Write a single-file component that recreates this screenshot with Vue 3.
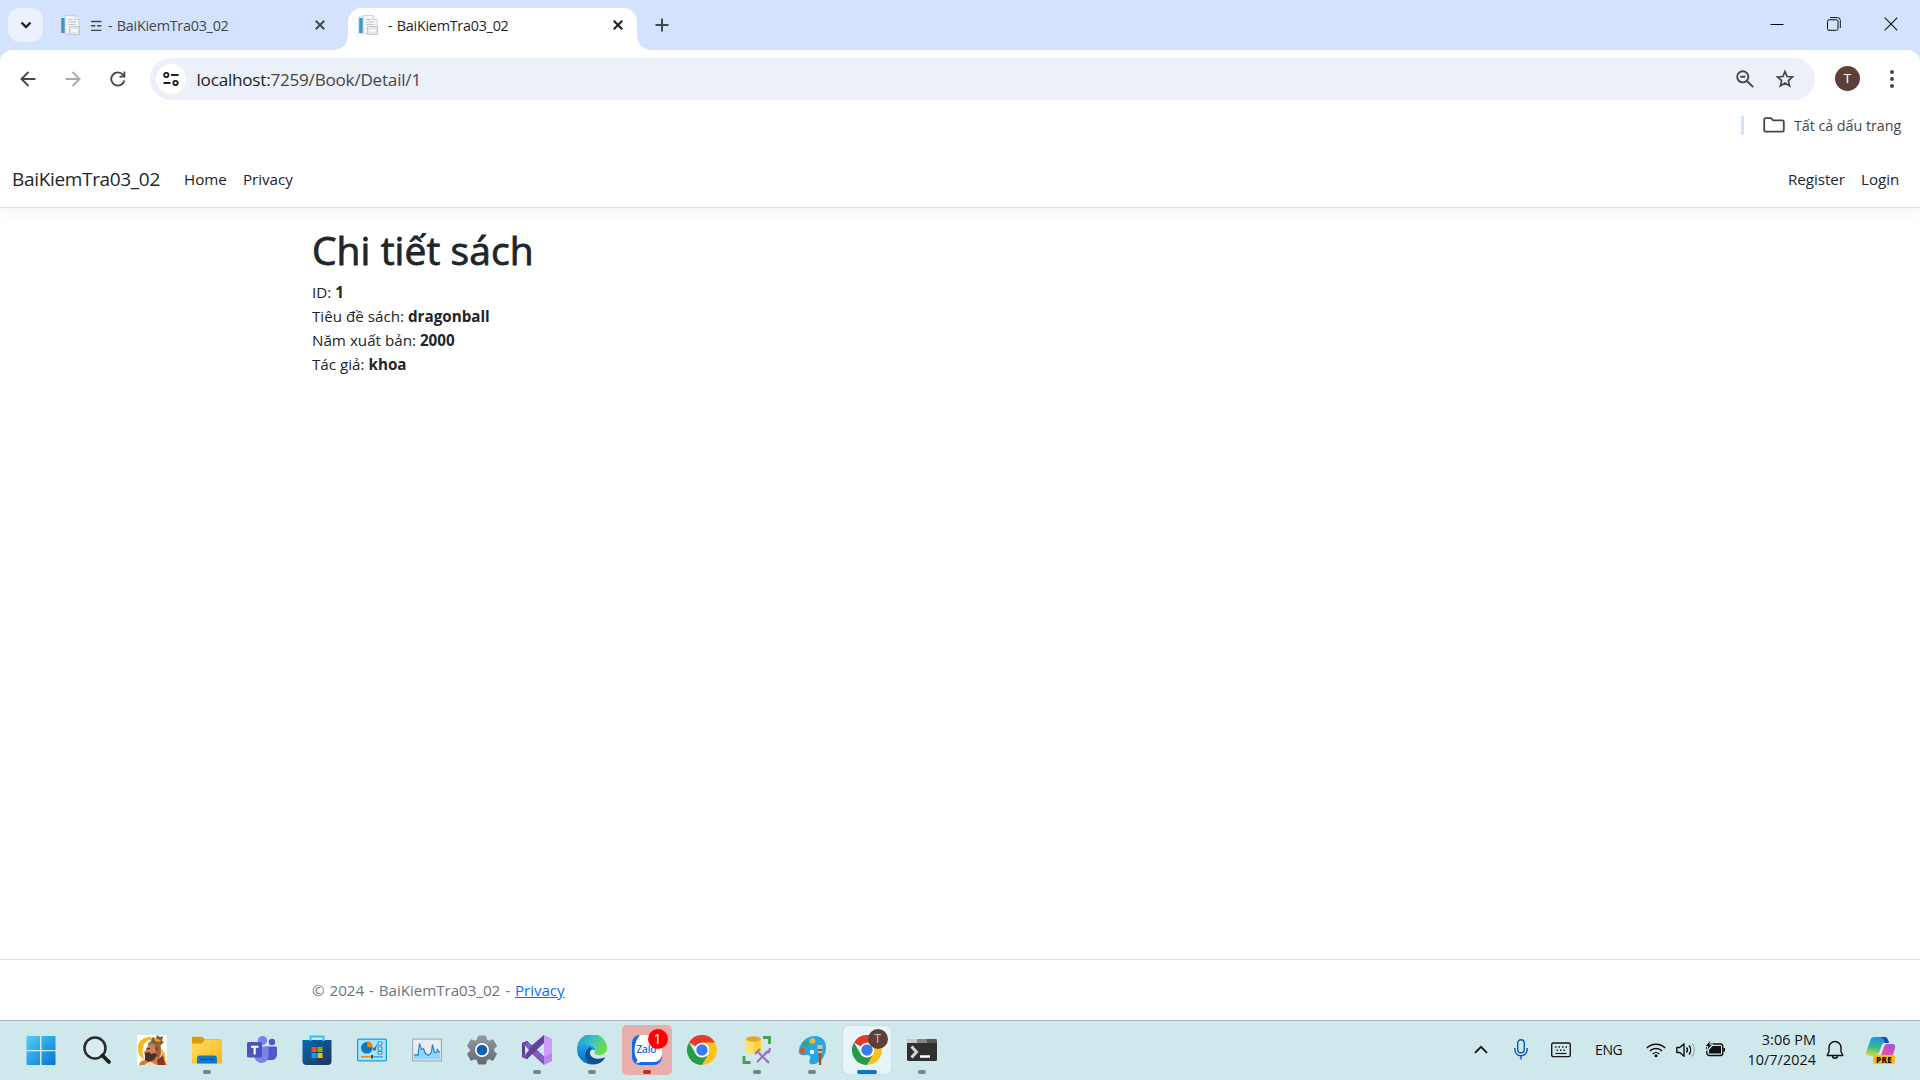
<script setup>
const tabs = [
  { trigram: '☲', title: '- BaiKiemTra03_02', active: false },
  { trigram: '', title: '- BaiKiemTra03_02', active: true },
]

const details = [
  { label: 'ID', value: '1' },
  { label: 'Tiêu đề sách', value: 'dragonball' },
  { label: 'Năm xuất bản', value: '2000' },
  { label: 'Tác giả', value: 'khoa' },
]
</script>

<template>
  <div class="screen">
    <header class="tab-strip">
      <button class="tab-search">
        <svg width="12" height="8" viewBox="0 0 12 8"><path d="M1.5 1.5 6 6l4.500-4.500" fill="none" stroke="#1f1f1f" stroke-width="2.300" /></svg>
      </button>
      <div v-for="(t, i) in tabs" :key="i" class="tab" :class="{ active: t.active }">
        <svg class="favicon" viewBox="0 0 20 20">
          <path d="M5 .5h10l4 4v14H5z" fill="#f4f5f6" stroke="#c6cbd0" stroke-width=".8" />
          <path d="M15 .5v4h4" fill="#fff" stroke="#bfc5cb" stroke-width=".8" />
          <path d="M8 4.500h5M8 7h8M8 9.500h8" stroke="#bfc5cc" />
          <path d="M.5 1.500h4.500v17H.5z" fill="#e3eff8" stroke="#ccd7e0" stroke-width=".6" />
          <path d="M1.200 3h3.500v15H1.200z" fill="#3b97d0" />
          <path d="M9.500 11.500h10v8h-10z" fill="#e6e9ed" stroke="#b6bcc4" stroke-width=".8" />
          <path d="M11 14h7v3h-7z" fill="#fff" stroke="#d2d6db" stroke-width=".6" />
        </svg>
        <span class="tab-title"><span v-if="t.trigram" class="trigram">{{ t.trigram }}</span><span class="tab-text">{{ t.title }}</span></span>
        <svg class="tab-close" viewBox="0 0 10 10"><path d="M.8.8l8.400 8.400M9.200.8.800 9.200" stroke="currentColor" stroke-width="2" /></svg>
      </div>
      <svg class="new-tab" width="14" height="14" viewBox="0 0 14 14"><path d="M7 .5v13M.5 7h13" stroke="#444746" stroke-width="2" /></svg>
      <div class="window-controls">
        <svg width="14" height="14" viewBox="0 0 14 14"><path d="M.5 7.500h13" stroke="#000" /></svg>
        <svg width="14" height="14" viewBox="0 0 14 14" fill="none" stroke="#111"><rect x=".5" y="2.800" width="10.500" height="10.500" rx="1.500" /><path d="M3 .6h7.500a2.800 2.800 0 0 1 2.800 2.800v7.600" /></svg>
        <svg width="14" height="14" viewBox="0 0 14 14"><path d="M.7.7l12.600 12.600M13.300.7.700 13.300" stroke="#111" stroke-width="1.100" /></svg>
      </div>
    </header>

    <div class="toolbar-wrap">
      <div class="toolbar">
        <svg class="nav-icon" viewBox="0 0 16 16"><path d="M15.500 8H2M8.500 1 1.500 8l7 7" fill="none" stroke="#444746" stroke-width="1.900" /></svg>
        <svg class="nav-icon" viewBox="0 0 16 16"><path d="M.5 8H14M7.500 1l7 7-7 7" fill="none" stroke="#a9abab" stroke-width="1.900" /></svg>
        <svg class="nav-icon" viewBox="0 0 16 16"><path d="M14.300 9.500A6.600 6.600 0 1 1 12.800 3.600L14.500 5.300" fill="none" stroke="#444746" stroke-width="1.900" /><path d="M15.300.5v6H9.500V4.700h4V.5z" fill="#444746" /></svg>
        <div class="omnibox">
          <span class="site-info">
            <svg width="16" height="14" viewBox="0 0 16 14" fill="none" stroke="#1f1f1f" stroke-width="1.800"><circle cx="3.300" cy="3" r="2.200" /><path d="M8 3h7.500M.5 11h7" /><circle cx="12.500" cy="11" r="2.200" /></svg>
          </span>
          <span class="url"><b>localhost:</b>7259/Book/Detail/1</span>
          <svg class="zoom-out" width="18" height="18" viewBox="0 0 18 18" fill="none" stroke="#444746" stroke-width="1.900"><circle cx="6.800" cy="6.800" r="5.600" /><path d="M11 11l6.200 6.200M4.200 6.800h5.200" /></svg>
          <svg width="20" height="20" viewBox="0 0 20 20"><path d="M10 2.500l2.100 5 5.400.5-4.100 3.600 1.200 5.300L10 14.100l-4.600 2.800 1.200-5.300L2.500 8l5.400-.5z" fill="none" stroke="#444746" stroke-width="1.700" /></svg>
        </div>
        <span class="avatar">T</span>
        <svg class="kebab" width="6" height="20" viewBox="0 0 6 20" fill="#444746"><circle cx="3" cy="3" r="2" /><circle cx="3" cy="10" r="2" /><circle cx="3" cy="17" r="2" /></svg>
      </div>
    </div>

    <div class="bookmarks">
      <span class="separator"></span>
      <svg width="22" height="16" viewBox="0 0 22 16"><path d="M1.200 13.300V2.500A1.300 1.300 0 0 1 2.500 1.200H8L10.200 3.400h9.300a1.300 1.300 0 0 1 1.300 1.300v8.600a1.300 1.300 0 0 1-1.300 1.300H2.500a1.300 1.300 0 0 1-1.300-1.300z" fill="none" stroke="#444746" stroke-width="1.800" /></svg>
      <span class="bookmarks-label">Tất cả dấu trang</span>
    </div>

    <nav class="navbar">
      <a class="brand">BaiKiemTra03_02</a>
      <a class="link home">Home</a>
      <a class="link privacy">Privacy</a>
      <a class="link register">Register</a>
      <a class="link login">Login</a>
    </nav>

    <main>
      <h1>Chi tiết sách</h1>
      <div v-for="d in details" :key="d.label" class="detail">{{ d.label }}: <b>{{ d.value }}</b></div>
    </main>

    <footer>© 2024 - BaiKiemTra03_02 - <a>Privacy</a></footer>

    <div class="taskbar">
      <div class="apps">
        <span class="app start">
          <svg width="30" height="30" viewBox="0 0 30 30">
            <defs><linearGradient id="win" x1="0" y1="0" x2="1" y2="1"><stop offset="0" stop-color="#4fd0fb" /><stop offset="1" stop-color="#0573d0" /></linearGradient></defs>
            <path d="M.5 2a1 1 0 0 1 1-1H14v14H.5zM15.500 1H28.500a1 1 0 0 1 1 1V15h-14zM.5 16.200H14V30H1.500a1 1 0 0 1-1-1zM15.500 16.200h14V29a1 1 0 0 1-1 1h-13z" fill="url(#win)" />
          </svg>
        </span>
        <span class="app">
          <svg width="30" height="30" viewBox="0 0 30 30"><circle cx="13" cy="13" r="10.500" fill="#dcecef" stroke="#2b2b2b" stroke-width="2.500" /><path d="M20.500 20.500l6.500 6.500" stroke="#1d1d1d" stroke-width="3.800" stroke-linecap="round" /></svg>
        </span>
        <span class="app">
          <svg width="30" height="30" viewBox="0 0 30 30">
            <path d="M0 0h30v30H0z" fill="#fffdf8" />
            <path d="M14 1.500C5 2 0 7 1 15c.5 5 3 8 7 9.500C4 19 4.500 9 11 5.500l4-1z" fill="#fbb91c" />
            <path d="M25 14c3 3 4 7 3 12l-5 2z" fill="#f3b73b" />
            <path d="M2 30c1-4 4-5.500 8-5l10-3 8 3 2 5z" fill="#c98236" />
            <path d="M11 10c2-2 8-3 11 0 3 3 3 8 1 12l-5 5-8-1-2-5-1-4 2-2z" fill="#c98055" />
            <path d="M17 9c4-1 7 1 7 5s-1 7-3 9l-3-3 1-5z" fill="#a65c38" />
            <path d="M11 9c1-3 4-4 7-3 4 0 6 2 6 5-4-2-8-2-13-1z" fill="#857a73" />
            <path d="M14 5l2-3 3 2 1-4 3 2 3-1-1 5 2 1-3 3-5-1-4-1z" fill="#8a5c20" />
            <path d="M17 4l4 0 3 2-2 1-4-1z" fill="#e0a82f" />
            <path d="M8 18l4-1 2 2 4-1 2 2-3 5-5 2-4-2z" fill="#503026" />
            <path d="M9.500 14l3.500-.6M19 12.500l1 3" stroke="#5e3122" stroke-width="1.300" />
            <path d="M20 25l6-5 2 10h-7z" fill="#8f3322" />
            <path d="M8 29l5-2.500 7 3.500H8z" fill="#f3ddb0" />
          </svg>
        </span>
        <span class="app running">
          <svg width="30" height="30" viewBox="0 0 30 30">
            <defs><linearGradient id="folder" x1="0" y1="0" x2="1" y2="1"><stop offset="0" stop-color="#ffdc66" /><stop offset="1" stop-color="#fcb814" /></linearGradient></defs>
            <path d="M0 9V3a1.300 1.300 0 0 1 1.300-1.300H10L13 4.500h15a2 2 0 0 1 2 2V9z" fill="#dc9a0b" />
            <path d="M0 8.500h9.500L13 5h15.500A1.500 1.500 0 0 1 30 6.500V28.500H0z" fill="url(#folder)" />
            <path d="M5 28.500v-5a3 3 0 0 1 3-3h14a3 3 0 0 1 3 3v5z" fill="#1078c8" /><path d="M8 24.500h14" stroke="#084e8d" stroke-width="1.200" />
          </svg>
        </span>
        <span class="app">
          <svg width="30" height="30" viewBox="0 0 30 30">
            <circle cx="25" cy="7" r="3.200" fill="#5059c9" /><path d="M18 11.500h10.500a1.500 1.500 0 0 1 1.500 1.500v6c0 4-2.500 6-5.500 6H20z" fill="#5059c9" />
            <circle cx="15.500" cy="5.500" r="4.600" fill="#7b83eb" /><path d="M8 11.500h13.500V21a7 7 0 0 1-14 0z" fill="#7b83eb" />
            <rect x="0" y="7" width="15" height="15.500" rx="1.500" fill="#4b53bc" /><path d="M4 10.800h7.400v2H8.700v6.600H6.600v-6.600H4z" fill="#fff" />
          </svg>
        </span>
        <span class="app">
          <svg width="30" height="30" viewBox="0 0 30 30">
            <defs><linearGradient id="store" x1="0" y1="0" x2="1" y2="1"><stop offset="0" stop-color="#0669b4" /><stop offset="1" stop-color="#243258" /></linearGradient></defs>
            <path d="M.5 5h29v21a4 4 0 0 1-4 4h-21a4 4 0 0 1-4-4z" fill="url(#store)" />
            <path d="M8.500 6V1.500h13V6" fill="none" stroke="#29c5f6" stroke-width="2" />
            <path d="M9.500 12h5v5h-5z" fill="#f25022" /><path d="M15.500 12h5v5h-5z" fill="#7fba00" /><path d="M9.500 18h5v5h-5z" fill="#00a4ef" /><path d="M15.500 18h5v5h-5z" fill="#ffb900" />
          </svg>
        </span>
        <span class="app">
          <svg width="30" height="30" viewBox="0 0 30 30">
            <rect x=".6" y="4.100" width="28.800" height="21.800" rx="1.200" fill="#a5e5fb" stroke="#1c9bd8" stroke-width="1.200" />
            <circle cx="9.800" cy="12.800" r="5.800" fill="#1676bd" /><path d="M10.300 12.200V6a6.500 6.500 0 0 1 5.500 6.200z" fill="#ef8214" />
            <path d="M17 15l3-5" stroke="#1c76b8" stroke-width="1.300" /><path d="M21 7h4v3h-4zM21 12h4v3h-4zM21 16.500h4v2.500h-4z" fill="#eafaff" stroke="#2177b4" stroke-width=".9" />
            <circle cx="17.500" cy="14" r="1.600" fill="#1c76b8" />
            <path d="M4 21.800h11" stroke="#f08b22" stroke-width="1.600" /><path d="M15 21.800h11" stroke="#4796c8" stroke-width="1.300" /><path d="M14 20h2v3.500h-2z" fill="#0b588f" />
          </svg>
        </span>
        <span class="app">
          <svg width="30" height="30" viewBox="0 0 30 30">
            <rect x=".6" y="4.100" width="28.800" height="21.800" fill="#e9ecf1" stroke="#a7adb8" stroke-width="1.200" />
            <path d="M2 24.500v-4l2-1 2 1 1.500-12 2 6 2-1 2 5 3 2 2-2 1-2 1-7 2 8 2 0 1-3 1 2 1.500 1v7z" fill="#94d4f9" /><path d="M2 20.500l2-1 2 1L7.500 8.500l2 6 2-1 2 5 3 2 2-2 1-2 1-7 2 8h2l1-3 1 2 1.500 1" fill="none" stroke="#2988c5" stroke-width="1.200" />
          </svg>
        </span>
        <span class="app">
          <svg width="30" height="30" viewBox="0 0 30 30">
            <defs><linearGradient id="gear" x1="0" y1="0" x2="0" y2="1"><stop offset="0" stop-color="#939aa1" /><stop offset="1" stop-color="#626971" /></linearGradient></defs>
            <path d="M11.500 1h7l1.200 4 2.300 1.200 4-1.500L29.500 11 26.700 14v2l2.800 3-3.500 6.300-4-1.500-2.300 1.200-1.200 4h-7l-1.200-4L8 23.800l-4 1.500L.5 19l2.800-3v-2L.5 11 4 4.700l4 1.500L10.300 5z" fill="url(#gear)" stroke="url(#gear)" stroke-linejoin="round" />
            <circle cx="15" cy="15" r="7" fill="#fff" /><circle cx="15" cy="15" r="5.300" fill="#0b62b4" />
          </svg>
        </span>
        <span class="app running">
          <svg width="30" height="30" viewBox="0 0 30 30">
            <path d="M0 8l5-2 8 9-8 9-5-2z" fill="#5c3d99" /><path d="M5 6l4 5v8l-4 5-5-2 4-7-4-7z" fill="#774aae" />
            <path d="M5 6l17 17v7L9 18 0 22l4-4z" fill="#8257bc" /><path d="M5 6l-1.500 4L22 28v-7z" fill="#805cc3" />
            <path d="M5 24 22 8V0L9 11 4 20z" fill="#63429e" /><path d="M22 0l8 4v22l-8 4z" fill="#bd86ef" /><path d="M22 0l8 4v14l-8 4z" fill="#cf9bfa" /><path d="M3 10.500v9l4-4.500z" fill="#cfe8ec" /><path d="M22 9v12l-6-6z" fill="#cfe8ec" />
          </svg>
        </span>
        <span class="app running">
          <svg width="30" height="30" viewBox="0 0 30 30">
            <defs>
              <linearGradient id="edge-a" x1="0" y1="0" x2="1" y2=".5"><stop offset="0" stop-color="#1697d3" /><stop offset=".5" stop-color="#37c0cc" /><stop offset="1" stop-color="#68e043" /></linearGradient>
              <linearGradient id="edge-b" x1="0" y1="0" x2="0" y2="1"><stop offset="0" stop-color="#24a6ea" /><stop offset="1" stop-color="#0866bb" /></linearGradient>
            </defs>
            <path d="M0 15A15 15 0 0 1 30 12.500c0 5.500-3.800 7.500-7.500 7.500-4 0-5-1-5-2s1.500-1.500 1-4C16 8 3 7 0 15z" fill="url(#edge-a)" />
            <path d="M0 15c1-6 7-7.500 12-5.500 4 1 7 4 6.500 6-4-2-6.500 1-5.500 4 2 5 8 7 14 4A15 15 0 0 1 0 15z" fill="url(#edge-b)" />
            <path d="M13 12c-4 3-6 8-3.500 12.500 2 3.500 6 5.500 10.500 4.500 4-1 6.500-3.500 8-6-.5-1-1-.5-2 0-6 2-12 0-13-4-.7-2.500.5-4.500 2-5.500z" fill="#134d91" />
          </svg>
        </span>
        <span class="app running alert">
          <svg width="30" height="30" viewBox="0 0 30 30"><rect width="30" height="30" rx="8" fill="#1469f2" /><path d="M8 0h14a8 8 0 0 1 8 8v11a8 8 0 0 1-8 8H9l-5 1.500 1.500-3.500C1 20 1.500 7 8 0z" fill="#fff" /></svg>
          <span class="zalo-name">Zalo</span>
          <span class="count">1</span>
        </span>
        <span class="app">
          <svg width="30" height="30" viewBox="0 0 30 30">
            <path d="M15 15 2 7.500A15 15 0 0 1 28 7.500z" fill="#e33b2e" /><path d="M15 7.500h13a15 15 0 0 1 2 7.500 15 15 0 0 1-15 15l6.500-11.250z" fill="#fbc31a" /><path d="M2 7.500l6.500 11.250A7.500 7.500 0 0 0 21.500 18.750L15 30A15 15 0 0 1 2 7.500z" fill="#299b48" />
            <circle cx="15" cy="15" r="7.300" fill="#fff" /><circle cx="15" cy="15" r="5.700" fill="#387cf0" />
          </svg>
        </span>
        <span class="app running">
          <svg width="30" height="30" viewBox="0 0 30 30">
            <path d="M4 4v12c0 3 15 3 15 0V4z" fill="#fdd63c" /><path d="M4 4v12c0 2 4 2.300 7 2.300V6z" fill="#ffe26a" /><ellipse cx="11.500" cy="4" rx="7.500" ry="2.800" fill="#e9a42b" />
            <path d="M21 2.500h6.500V9M2 21v6.500h6.500" fill="none" stroke="#43a052" stroke-width="2.800" />
            <path d="M16 17l10 10M26 16 15 27" stroke="#a968d4" stroke-width="2.200" /><path d="M13 19l5-5M23 18l4-1 1-4M24 25l3 3" fill="none" stroke="#a968d4" stroke-width="2.300" />
          </svg>
        </span>
        <span class="app running">
          <svg width="30" height="30" viewBox="0 0 30 30">
            <path d="M2 15C3 7 10 1 18 1c7 0 11 5 11 11 0 9-5 15-11 17-5 1-7-1-5-5 1-3 0-4-4-4-5 1-8-1-7-5z" fill="#29a7df" />
            <circle cx="15" cy="17" r="2.300" fill="#d8f0f7" /><circle cx="5.500" cy="15.500" r="2.700" fill="#e65131" /><circle cx="8.500" cy="9" r="2.800" fill="#37a84b" /><circle cx="15.500" cy="6" r="2.800" fill="#f9b928" />
            <path d="M20.500 10h5v6l-1 2h-3l-1-2z" fill="#e2bc91" /><path d="M20.500 14h5v2h-5z" fill="#70685f" /><path d="M21.500 18h3l-.3 12h-2.200z" fill="#a95413" />
          </svg>
        </span>
        <span class="app current">
          <svg width="30" height="30" viewBox="0 0 30 30">
            <path d="M15 15 2 7.500A15 15 0 0 1 28 7.500z" fill="#e33b2e" /><path d="M15 7.500h13a15 15 0 0 1 2 7.500 15 15 0 0 1-15 15l6.500-11.250z" fill="#fbc31a" /><path d="M2 7.500l6.500 11.250A7.500 7.500 0 0 0 21.500 18.750L15 30A15 15 0 0 1 2 7.500z" fill="#299b48" />
            <circle cx="15" cy="15" r="7.300" fill="#fff" /><circle cx="15" cy="15" r="5.700" fill="#387cf0" />
          </svg>
          <span class="profile">T</span>
        </span>
        <span class="app running">
          <svg width="30" height="30" viewBox="0 0 30 30"><path d="M0 8V5.500A1.500 1.500 0 0 1 1.500 4h27A1.500 1.500 0 0 1 30 5.500V8z" fill="#858585" /><path d="M0 8V5.500A1.500 1.500 0 0 1 1.500 4H10v4z" fill="#c9c9c9" /><path d="M20 4h8.500A1.500 1.500 0 0 1 30 5.500V8H20z" fill="#565656" /><path d="M0 8h30v16.500a1.500 1.500 0 0 1-1.500 1.500h-27A1.500 1.500 0 0 1 0 24.500z" fill="#303030" /><path d="M4.500 11.500l5 5.500-5 5.500" fill="none" stroke="#d5d5d5" stroke-width="3" /><path d="M13 21.500h10" stroke="#fff" stroke-width="2.500" /></svg>
        </span>
      </div>

      <div class="tray">
        <svg class="chevron" width="14" height="9" viewBox="0 0 14 9"><path d="M1 7.800 7 1.800l6 6" fill="none" stroke="#111" stroke-width="1.800" /></svg>
        <svg class="mic" width="14" height="21" viewBox="0 0 14 21" fill="none" stroke="#0c59b5" stroke-width="1.400"><rect x="3.700" y=".8" width="6.600" height="13" rx="3.300" /><path d="M.8 9v1.500a6.200 6.200 0 0 0 12.400 0V9M7 16.800V20.500" /></svg>
        <svg class="keyboard" width="20" height="16" viewBox="0 0 20 16" fill="none" stroke="#1a1a1a" stroke-width="1.400"><rect x=".7" y="1" width="18.600" height="13.600" rx="1.500" /><path d="M4 5h1.500m2 0H9m2 0h1.500m2 0H16M5.500 8.200H7m2 0h1.500m2 0H14" stroke-width="1.600" /><path d="M4.500 11.500h11" stroke-width="1.200" /></svg>
        <span class="lang">ENG</span>
        <svg class="wifi" width="20" height="16" viewBox="0 0 20 16" fill="none" stroke="#111" stroke-width="1.400"><path d="M.8 6a13 13 0 0 1 18.400 0M3.800 9a8.800 8.800 0 0 1 12.400 0M6.700 12a4.700 4.700 0 0 1 6.600 0" /><circle cx="10" cy="13.700" r="1.500" fill="#111" stroke="none" /></svg>
        <svg class="sound" width="20" height="16" viewBox="0 0 20 16" fill="none" stroke="#111" stroke-width="1.400"><path d="M.8 5.500h3L8 1.800v12.400L3.800 10.500h-3z" stroke-linejoin="round" /><path d="M10.500 5.500a4 4 0 0 1 0 5M13 3.500a7 7 0 0 1 0 9" /><path d="M16 1.500a10 10 0 0 1 0 13" stroke="#9db5bb" /></svg>
        <svg class="battery" width="21" height="17" viewBox="0 0 21 17"><rect x="1.800" y="4" width="16" height="11.500" rx="2.500" fill="none" stroke="#111" stroke-width="1.400" /><path d="M7.500 6H16v7.500H4V10zM18.300 8h1.700v3.500h-1.700z" fill="#111" /><path d="M5.800-.5-.2 6.500h3L1.500 11 8 4.200H4.800z" fill="#111" stroke="#cfe8ec" stroke-width="1" /></svg>
        <div class="clock"><span class="time">3:06 PM</span><span class="date">10/7/2024</span></div>
        <svg class="bell" width="18" height="20" viewBox="0 0 18 20" fill="none" stroke="#111" stroke-width="1.400"><path d="M9 1.500a6 6 0 0 0-6 6v4L1.200 15.500h15.600L15 11.500v-4a6 6 0 0 0-6-6zM6.500 15.800a2.500 2.500 0 0 0 5 0" stroke-linejoin="round" /></svg>
        <div class="copilot">
          <svg width="30" height="28" viewBox="0 0 30 28">
            <defs>
              <linearGradient id="cp-a" x1=".3" y1="0" x2=".2" y2="1"><stop offset="0" stop-color="#1f95e8" /><stop offset=".5" stop-color="#31b98f" /><stop offset="1" stop-color="#dfdc35" /></linearGradient>
              <linearGradient id="cp-b" x1="1" y1="0" x2="0" y2="1"><stop offset="0" stop-color="#9b50e0" /><stop offset=".5" stop-color="#e654a4" /><stop offset="1" stop-color="#fa973f" /></linearGradient>
            </defs>
            <path d="M8 1h11q2 0 3 3l1 3h-4q-3 0-4 4l-2 6q-1 3-4 3H4q-5 0-3.500-5L4 5q1-4 4-4z" fill="url(#cp-a)" /><path d="M14 1h5q2 0 3 3l1 3h-4q-1-5-5-6z" fill="#1647c5" />
            <path d="M20 8h6q4 0 3 4l-3 10q-1 4-5 4H10q-3-1-3-4h4q3 0 4-4l2-6q1-4 3-4z" fill="url(#cp-b)" />
            <path d="M17.500 7.500h3q-2 1-3 4l-2 6q-1 2.500-3 3h-1.500q2-.5 3-3.500l2-6q.5-2.500 1.500-3.500z" fill="#e6f1f3" />
          </svg>
          <span class="pre">PRE</span>
        </div>
      </div>
    </div>
  </div>
</template>

<style>
body { overflow: hidden; }
</style>

<style scoped>
* { box-sizing: border-box; }
.screen { width: 1920px; height: 1080px; display: flex; flex-direction: column; background: #fff; color: #212529; font-family: "Open Sans", "Noto Sans", sans-serif; font-size: 15.2px; white-space: nowrap; overflow: hidden; }
svg { display: block; flex: none; }

.tab-strip { height: 50px; flex: none; display: flex; padding: 8px 22px 0 8px; background: #d3e3fd; }
.tab-search { width: 35px; height: 34px; border: 0; padding: 0; border-radius: 12px; background: #ebf1fe; display: flex; align-items: center; justify-content: center; }
.tab { width: 305px; height: 42px; display: flex; align-items: center; padding: 0 23px 8px 17px; color: #444746; }
.tab.active { position: relative; width: 289px; padding: 0 14px 8px 10px; border-radius: 14px 14px 0 0; background: #fff; color: #1f1f1f; }
.tab.active::before, .tab.active::after { content: ""; position: absolute; bottom: 0; width: 14px; height: 14px; }
.tab.active::before { right: 100%; background: radial-gradient(circle at 0 0, transparent 13.5px, #fff 14px); }
.tab.active::after { left: 100%; background: radial-gradient(circle at 100% 0, transparent 13.5px, #fff 14px); }
.favicon { width: 20px; height: 20px; }
.tab-title { flex: 1; display: flex; align-items: center; margin-left: 10px; padding-top: 2px; font-size: 14.4px; line-height: 20px; }
.trigram { width: 18px; font-family: "DejaVu Sans", sans-serif; font-size: 14px; }
.tab-text { letter-spacing: -0.27px; word-spacing: 1px; }
.tab-close { width: 10px; height: 10px; }
.new-tab { margin: 10px 0 0 18px; }
.window-controls { margin: 9px 0 0 auto; display: flex; gap: 43px; }

.toolbar-wrap { background: #d3e3fd; flex: none; }
.toolbar { height: 58px; display: flex; align-items: center; padding: 0 25px 0 20px; border-radius: 12px 12px 0 0; background: #fff; }
.nav-icon { width: 16px; height: 16px; margin-right: 29px; }
.nav-icon:nth-child(3) { margin-right: 24px; }
.omnibox { width: 1665px; height: 42px; display: flex; align-items: center; padding: 0 20px 0 6px; border-radius: 21px; background: #ecf0f9; }
.site-info { width: 30px; height: 30px; border-radius: 50%; background: #fff; display: flex; align-items: center; justify-content: center; }
.url { flex: 1; margin-left: 10.5px; font-size: 17.1px; letter-spacing: -0.22px; color: #474747; }
.url b { font-weight: 400; color: #1f1f1f; }
.zoom-out { margin-right: 21px; }
.avatar { width: 25px; height: 25px; margin: 0 29px 1px 20px; border-radius: 50%; background: #5d4037; color: #fff; font: 13px/25px Roboto, sans-serif; text-align: center; }
.kebab { margin-bottom: 1px; }
.bookmarks { height: 36px; flex: none; display: flex; align-items: center; justify-content: flex-end; padding: 0 19px 2px 0; }
.separator { width: 3px; height: 19px; margin-right: 19px; border-radius: 1px; background: #d3e3fd; }
.bookmarks-label { width: 107px; margin-left: 9px; font-size: 14.4px; letter-spacing: -.08px; color: #474747; }

.navbar { height: 64px; flex: none; display: flex; align-items: center; padding: 6px 20px 0 12px; border-bottom: 1px solid #dee2e6; box-shadow: 0 4px 12px rgba(0, 0, 0, .05); clip-path: inset(0 0 -20px 0); }
.brand { width: 172px; font-size: 19px; letter-spacing: -.33px; }
.home { width: 59px; }
.privacy { flex: 1; }
.link { letter-spacing: -.05px; }
.register { width: 73px; }
.login { width: 39px; }

main { flex: 1; padding: 16px 312px 0; }
h1 { margin: 0 0 8px; font-size: 39px; line-height: 51px; height: 48px; font-weight: 400; letter-spacing: .05px; -webkit-text-stroke: .8px #212529; }
.detail { line-height: 24px; }
footer { height: 61px; flex: none; padding-left: 312px; border-top: 1px solid #dee2e6; color: #6c757d; line-height: 60px; word-spacing: 1.1px; letter-spacing: -.06px; }
footer a { color: #0d6efd; text-decoration: underline; }

.taskbar { height: 60px; flex: none; display: flex; justify-content: space-between; border-top: 1px solid #a6b5ba; background: #cfe8ec; color: #111; }
.apps { display: flex; align-items: center; gap: 7px; padding: 0 0 1px 17.500px; }
.app { position: relative; width: 48px; height: 50px; display: flex; align-items: center; justify-content: center; border-radius: 5px; }
.start svg { margin-right: 2px; }
.running::after, .current::after { content: ""; position: absolute; left: 50%; bottom: 1px; width: 8px; height: 4px; margin-left: -4px; border-radius: 2px; background: #748487; }
.alert { width: 50px; margin: 0 -1px; background: #e8aeab; }
.alert::after { background: #c42b1c; }
.current { background: #e6f3f7; box-shadow: 0 0 1px rgba(0, 0, 0, .25); height: 48px; }
.current::after { width: 20px; margin-left: -10px; bottom: 0; background: #0078d4; }
.zalo-name { position: absolute; left: 15px; top: 17px; width: 24px; font: 600 10px/14px "Open Sans", sans-serif; letter-spacing: -.2px; color: #1469f2; }
.count { position: absolute; left: 26px; top: 4px; width: 20px; height: 20px; border-radius: 50%; background: #f00; color: #fff; font-size: 14px; line-height: 20px; text-align: center; }
.profile { position: absolute; left: 25px; top: 3px; width: 20px; height: 20px; border-radius: 50%; background: #5d4037; color: #c9bfbb; font: 12px/20px Roboto, sans-serif; text-align: center; }
.tray { display: flex; align-items: center; padding: 0 24px 2px 0; }
.mic { margin-left: 26px; }
.keyboard { margin-left: 23px; }
.lang { width: 28px; margin-left: 24px; font-size: 14px; letter-spacing: -.4px; }
.wifi { margin-left: 23px; }
.sound { margin-left: 10px; }
.battery { margin-left: 9px; margin-top: -3px; overflow: visible; }
.clock { width: 90px; display: flex; flex-direction: column; align-items: flex-end; font-size: 14.4px; line-height: 20px; letter-spacing: .05px; }
.bell { margin-left: 10px; }
.copilot { position: relative; margin-left: 22px; }
.pre { position: absolute; left: 7px; bottom: 0; width: 22px; height: 9px; border-radius: 2px; background: #fdb913; font: 800 8px/9px "Open Sans", sans-serif; letter-spacing: .3px; text-align: center; }
</style>
